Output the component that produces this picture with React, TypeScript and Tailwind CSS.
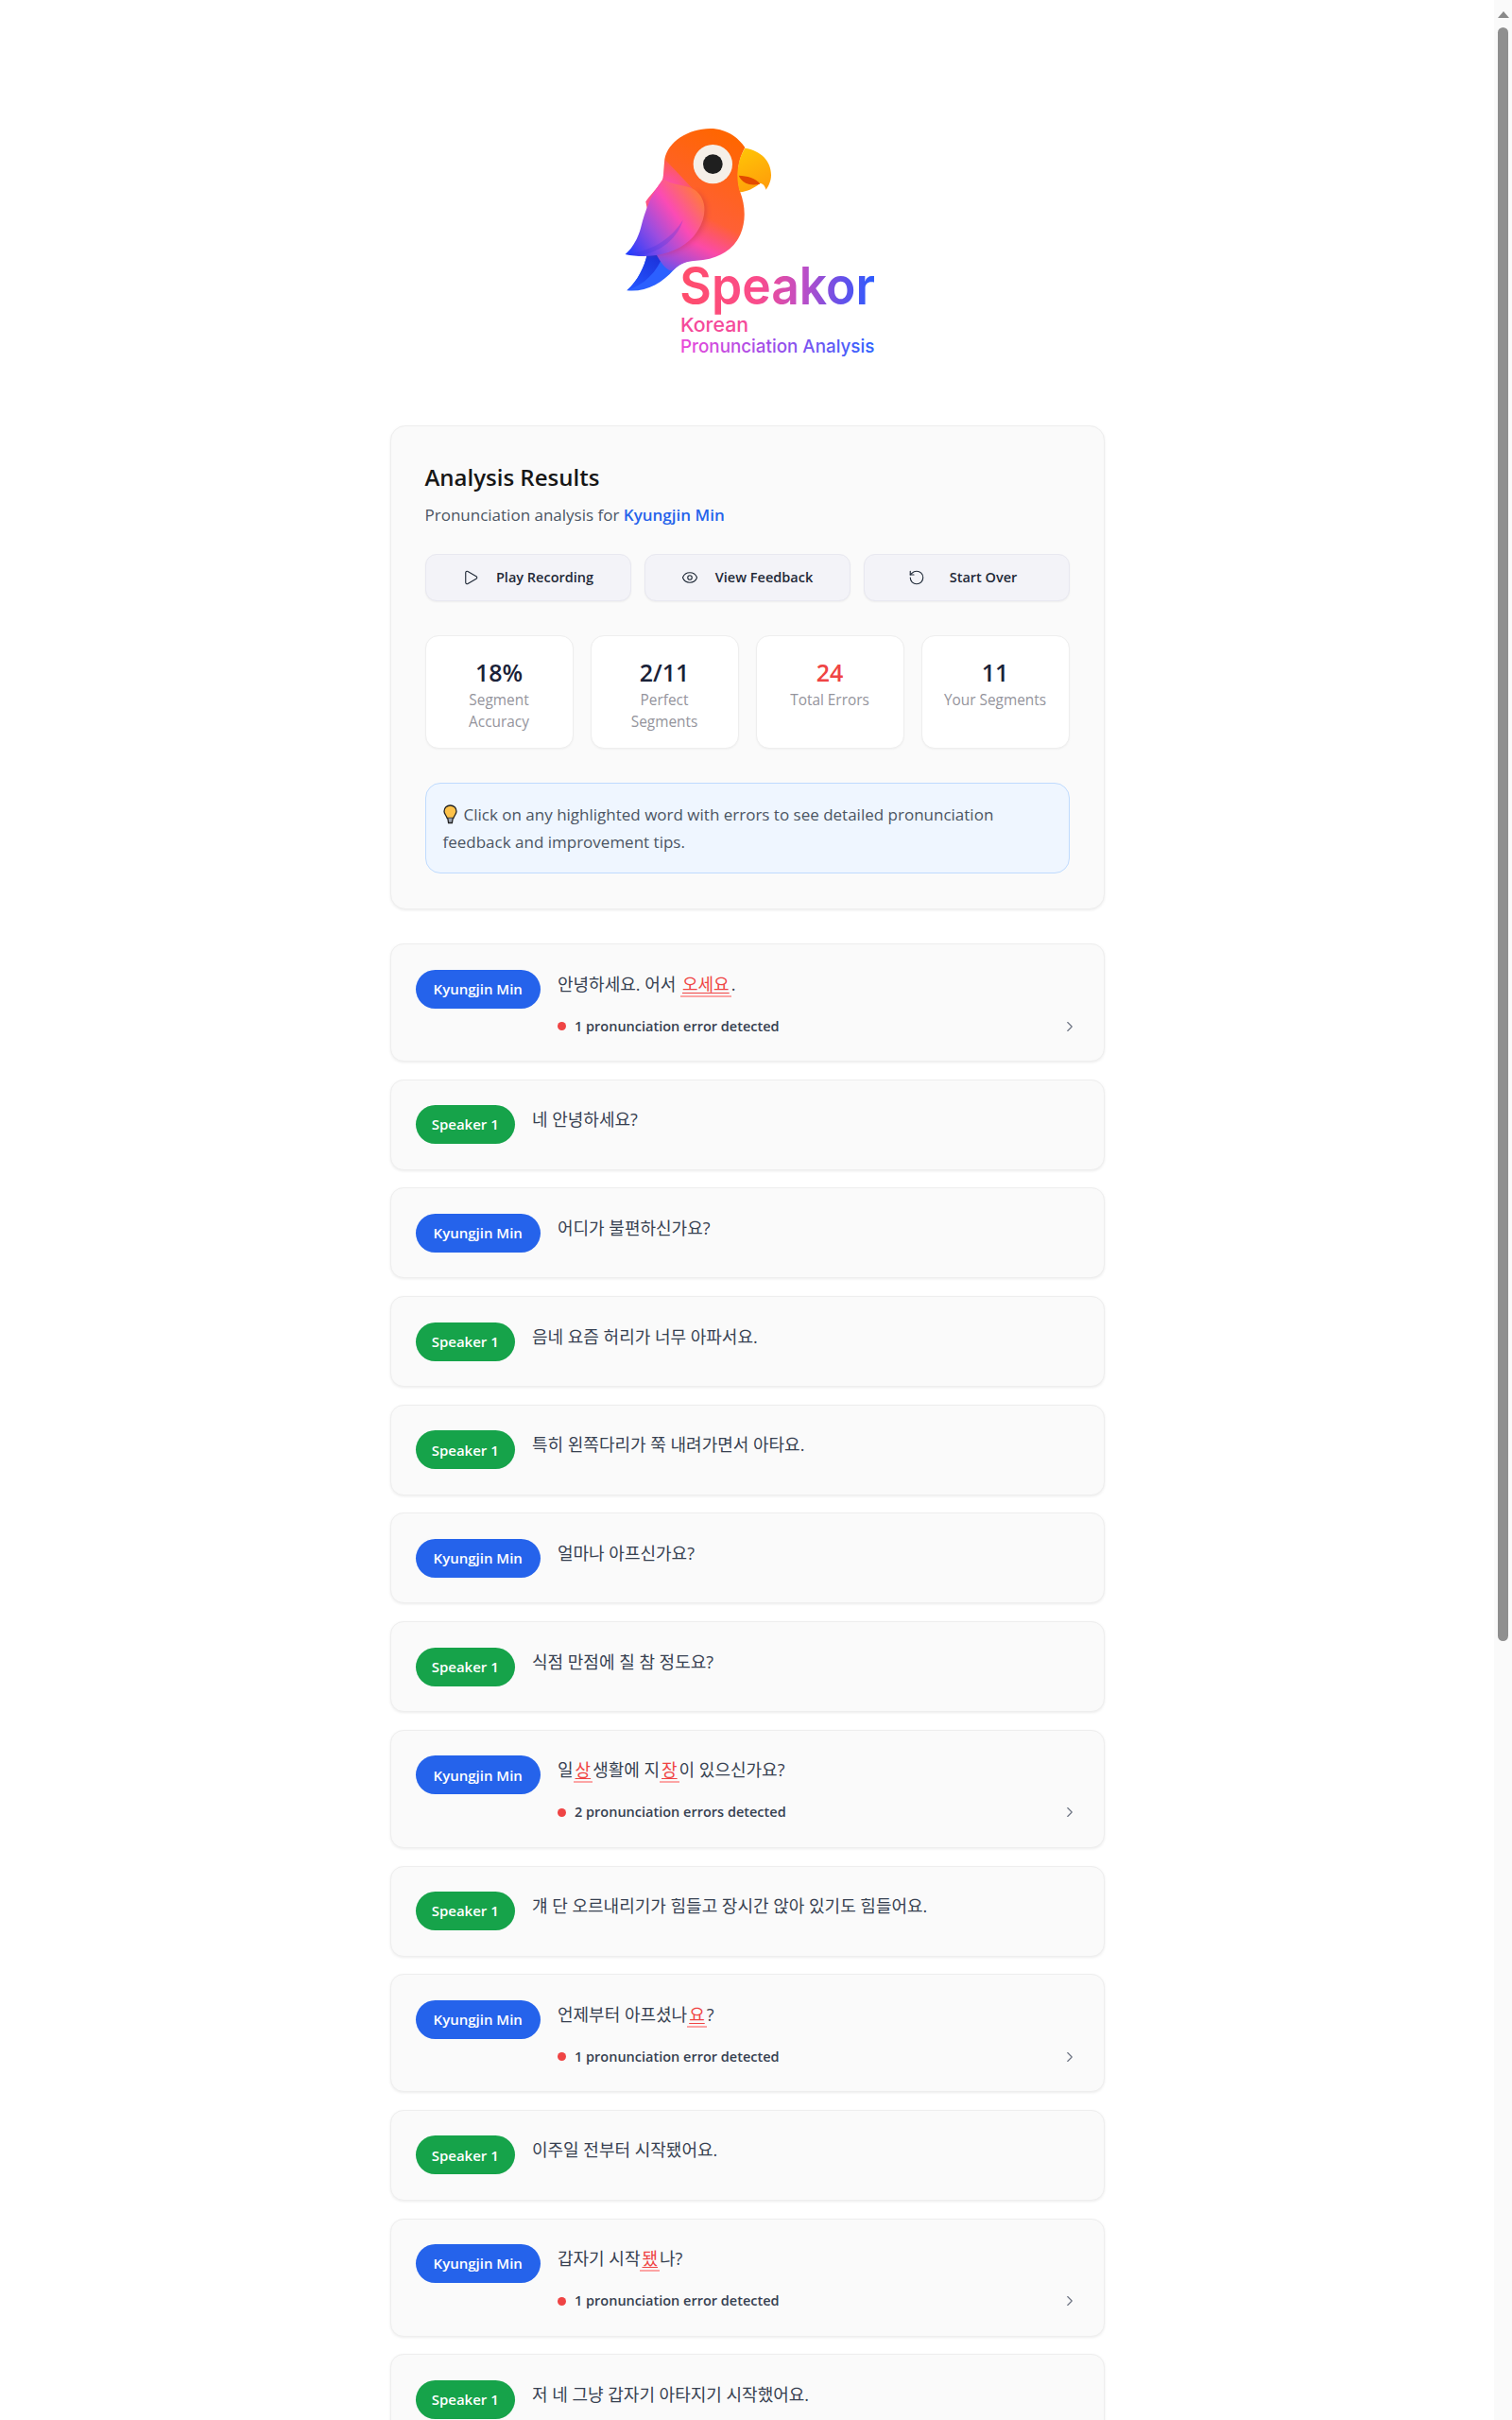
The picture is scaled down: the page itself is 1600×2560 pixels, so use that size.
import { ChevronRight, Eye, Play, RotateCcw } from "lucide-react";

const USER = "Kyungjin Min";
const OTHER = "Speaker 1";

type Part = string | { err: string };

type Segment = {
  speaker: string;
  parts: Part[];
  errors?: string;
};

const segments: Segment[] = [
  { speaker: USER, parts: ["안녕하세요. 어서 ", { err: "오세요" }, "."], errors: "1 pronunciation error detected" },
  { speaker: OTHER, parts: ["네 안녕하세요?"] },
  { speaker: USER, parts: ["어디가 불편하신가요?"] },
  { speaker: OTHER, parts: ["음네 요즘 허리가 너무 아파서요."] },
  { speaker: OTHER, parts: ["특히 왼쪽다리가 쭉 내려가면서 아타요."] },
  { speaker: USER, parts: ["얼마나 아프신가요?"] },
  { speaker: OTHER, parts: ["식점 만점에 칠 참 정도요?"] },
  { speaker: USER, parts: ["일", { err: "상" }, "생활에 지", { err: "장" }, "이 있으신가요?"], errors: "2 pronunciation errors detected" },
  { speaker: OTHER, parts: ["걔 단 오르내리기가 힘들고 장시간 앉아 있기도 힘들어요."] },
  { speaker: USER, parts: ["언제부터 아프셨나", { err: "요" }, "?"], errors: "1 pronunciation error detected" },
  { speaker: OTHER, parts: ["이주일 전부터 시작됐어요."] },
  { speaker: USER, parts: ["갑자기 시작", { err: "됐" }, "나?"], errors: "1 pronunciation error detected" },
  { speaker: OTHER, parts: ["저 네 그냥 갑자기 아타지기 시작했어요."] },
];

const stats = [
  { value: "18%", label: "Segment Accuracy" },
  { value: "2/11", label: "Perfect Segments" },
  { value: "24", label: "Total Errors", red: true },
  { value: "11", label: "Your Segments" },
];

function Logo() {
  return (
    <svg width="381" height="300" viewBox="0 0 1143 900" className="shrink-0">
      <defs>
        <linearGradient id="body" gradientUnits="userSpaceOnUse" x1="520" y1="130" x2="270" y2="620">
          <stop offset="0" stopColor="#ff6600" />
          <stop offset="0.48" stopColor="#ff6035" />
          <stop offset="0.65" stopColor="#fb4aa8" />
          <stop offset="0.79" stopColor="#a24bd8" />
          <stop offset="0.93" stopColor="#2b5cff" />
        </linearGradient>
        <radialGradient id="chest" gradientUnits="userSpaceOnUse" cx="315" cy="300" r="120">
          <stop offset="0" stopColor="#fb4ac0" />
          <stop offset="1" stopColor="#fb4ac0" stopOpacity="0" />
        </radialGradient>
        <linearGradient id="wing" gradientUnits="userSpaceOnUse" x1="435" y1="335" x2="195" y2="510">
          <stop offset="0" stopColor="#ff7a3c" />
          <stop offset="0.34" stopColor="#fb4bb4" />
          <stop offset="0.64" stopColor="#9a4de0" />
          <stop offset="1" stopColor="#1f3dff" />
        </linearGradient>
        <linearGradient id="tail" gradientUnits="userSpaceOnUse" x1="300" y1="510" x2="210" y2="625">
          <stop offset="0" stopColor="#1b2fd8" />
          <stop offset="1" stopColor="#2356ff" />
        </linearGradient>
        <linearGradient id="beak" gradientUnits="userSpaceOnUse" x1="570" y1="180" x2="630" y2="300">
          <stop offset="0" stopColor="#ffc107" />
          <stop offset="1" stopColor="#ff9d0a" />
        </linearGradient>
        <linearGradient id="word" gradientUnits="userSpaceOnUse" x1="360" y1="600" x2="975" y2="640">
          <stop offset="0" stopColor="#ff4d6a" />
          <stop offset="0.4" stopColor="#fa4c8c" />
          <stop offset="0.62" stopColor="#c24ec4" />
          <stop offset="0.82" stopColor="#6a50e8" />
          <stop offset="1" stopColor="#2a5cff" />
        </linearGradient>
        <linearGradient id="tagline" gradientUnits="userSpaceOnUse" x1="360" y1="800" x2="975" y2="800">
          <stop offset="0" stopColor="#ec48d8" />
          <stop offset="0.55" stopColor="#8f50ec" />
          <stop offset="1" stopColor="#2f62ff" />
        </linearGradient>
        <filter id="soft" x="-20%" y="-20%" width="140%" height="140%">
          <feGaussianBlur stdDeviation="8" />
        </filter>
      </defs>
      <path
        d="M255 505 C245 550 225 590 190 622 C250 628 300 600 340 555 C360 535 380 528 410 525 L330 480 Z"
        fill="#2b60ff"
      />
      <path d="M255 505 C245 550 225 590 190 622 C245 605 285 565 308 505 Z" fill="url(#tail)" />
      <path
        d="M455 108 C500 108 540 130 565 168 C545 205 535 250 550 310 C565 350 570 400 550 445 C525 500 470 525 410 527 C385 528 360 535 340 555 C325 570 300 540 280 500 L250 340 C280 300 300 285 305 265 C308 240 308 225 310 205 C320 150 385 108 455 108 Z"
        fill="url(#body)"
      />
      <path
        d="M305 265 C308 240 308 225 310 205 L400 300 L300 400 L250 340 C280 300 300 285 305 265 Z"
        fill="url(#chest)"
      />
      <path
        d="M230 505 C300 520 385 500 425 435 C455 385 450 335 412 305 L400 420 Z"
        fill="#b0204e"
        opacity="0.3"
        filter="url(#soft)"
      />
      <path
        d="M305 268 C265 320 248 370 235 420 C225 460 205 490 185 507 C265 525 370 505 415 432 C445 385 445 330 405 302 C375 285 335 290 305 268 Z"
        fill="url(#wing)"
      />
      <path d="M185 507 C265 500 330 460 368 398 C350 465 270 525 185 507 Z" fill="#3a2fe0" opacity="0.25" />
      <circle cx="463" cy="221" r="62" fill="#f5efe8" />
      <circle cx="463" cy="221" r="31" fill="#1f1f1f" />
      <path
        d="M565 170 C615 178 648 210 648 255 C648 275 640 290 632 302 C628 290 622 282 612 282 C595 298 570 308 550 310 C538 280 535 215 565 170 Z"
        fill="url(#beak)"
      />
      <path d="M545 257 C572 258 600 265 613 284 C585 290 558 285 545 257 Z" fill="#e34a00" />
      <g fontFamily="Inter, sans-serif">
        <text x="358" y="665" fontSize="165" fontWeight="600" fill="url(#word)" textLength="620" lengthAdjust="spacingAndGlyphs">
          Speakor
        </text>
        <text x="360" y="754" fontSize="62" fontWeight="500" fill="#f54a9a" textLength="216" lengthAdjust="spacingAndGlyphs">
          Korean
        </text>
        <text x="360" y="818" fontSize="57" fontWeight="500" fill="url(#tagline)" textLength="616" lengthAdjust="spacingAndGlyphs">
          Pronunciation Analysis
        </text>
      </g>
    </svg>
  );
}

function Bulb() {
  return (
    <svg width="15" height="21" viewBox="0 0 15 21" className="mr-[7px] inline-block align-[-4px]">
      <path
        d="M7.5 1 C3.8 1 1 3.8 1 7.2 C1 9.8 3 11.3 4.2 14.5 L10.8 14.5 C12 11.3 14 9.8 14 7.2 C14 3.8 11.2 1 7.5 1 Z"
        fill="#fdc24a"
        stroke="#222222"
        strokeWidth="1.3"
      />
      <path d="M4.8 14.5 L5.6 19.5 L9.4 19.5 L10.2 14.5" fill="#9ca3af" stroke="#222222" strokeWidth="1.3" />
    </svg>
  );
}

function SegmentCard({ segment }: { segment: Segment }) {
  const isUser = segment.speaker === USER;
  return (
    <div className="flex items-start gap-[18.5px] rounded-[14px] border border-[#eeeeee] bg-[#fafafa] p-[26.5px] shadow-[0_1px_3px_rgba(0,0,0,0.08)]">
      <span
        className={
          isUser
            ? "flex h-[41px] w-[131.5px] shrink-0 items-center justify-center rounded-full bg-[#2563eb] text-[15px] font-semibold text-white"
            : "flex h-[41px] w-[104.5px] shrink-0 items-center justify-center rounded-full bg-[#16a34a] text-[15px] font-semibold text-white"
        }
      >
        {segment.speaker}
      </span>
      <div className="min-w-0 flex-1">
        <p className="pt-[1px] text-[18px] leading-[29px] text-[#374151]">
          {segment.parts.map((part, i) =>
            typeof part === "string" ? (
              <span key={i}>{part}</span>
            ) : (
              <span
                key={i}
                className="border-b-2 border-[#fca5a5] px-[2px] text-[#ef4444] underline decoration-[#ef4444] underline-offset-2"
              >
                {part.err}
              </span>
            ),
          )}
        </p>
        {segment.errors && (
          <div className="mt-[20px] flex h-[20px] items-center justify-between">
            <div className="flex items-center gap-[9px] text-[14.5px] font-semibold text-[#374151]">
              <span className="h-[9px] w-[9px] rounded-full bg-[#ef4444]" />
              {segment.errors}
            </div>
            <ChevronRight className="h-[18px] w-[18px] text-[#6b7280]" strokeWidth={1.5} />
          </div>
        )}
      </div>
    </div>
  );
}

export default function App() {
  return (
    <div className="flex h-screen overflow-hidden bg-white font-['Open_Sans','Noto_Sans_CJK_KR',sans-serif]">
      <main className="min-w-0 flex-1">
        <div className="mx-auto flex w-[756px] flex-col pt-[100px]">
          <div className="mb-[50px] flex justify-center">
            <Logo />
          </div>

          <section className="rounded-[16px] border border-[#eeeeee] bg-[#fafafa] px-[36px] pb-[37px] pt-[36px] shadow-[0_1px_3px_rgba(0,0,0,0.08)]">
            <h1 className="text-[24px] font-semibold leading-[36px] text-[#171717]">Analysis Results</h1>
            <p className="mt-[9px] text-[17px] leading-[26px] text-[#4b5563]">
              Pronunciation analysis for <span className="font-semibold text-[#2563eb]">Kyungjin Min</span>
            </p>

            <div className="mt-[28px] grid grid-cols-3 gap-[14px]">
              <button className="flex h-[50px] items-center justify-center gap-[18px] rounded-[12px] border border-[#e8e8f0] bg-[#f3f3f8] text-[14.5px] font-semibold text-[#1f2937] shadow-[0_1px_2px_rgba(0,0,0,0.05)]">
                <Play className="h-[18px] w-[18px]" strokeWidth={1.5} />
                Play Recording
              </button>
              <button className="flex h-[50px] items-center justify-center gap-[18px] rounded-[12px] border border-[#e8e8f0] bg-[#f3f3f8] text-[14.5px] font-semibold text-[#1f2937] shadow-[0_1px_2px_rgba(0,0,0,0.05)]">
                <Eye className="h-[18px] w-[18px]" strokeWidth={1.5} />
                View Feedback
              </button>
              <button className="flex h-[50px] items-center justify-center gap-[26px] rounded-[12px] border border-[#e8e8f0] bg-[#f3f3f8] pr-[8px] text-[14.5px] font-semibold text-[#1f2937] shadow-[0_1px_2px_rgba(0,0,0,0.05)]">
                <RotateCcw className="h-[18px] w-[18px]" strokeWidth={1.5} />
                Start Over
              </button>
            </div>

            <div className="mt-[36px] grid grid-cols-4 gap-[18px]">
              {stats.map((stat) => (
                <div
                  key={stat.label}
                  className="h-[120px] rounded-[14px] border border-[#eeeeee] bg-white px-[18px] pt-[20px] text-center shadow-[0_1px_2px_rgba(0,0,0,0.04)]"
                >
                  <div className={stat.red ? "text-[25px] font-semibold leading-[36px] text-[#ef4444]" : "text-[25px] font-semibold leading-[36px] text-[#1a2238]"}>
                    {stat.value}
                  </div>
                  <div className="text-[15.4px] font-medium leading-[23px] text-[#94949c]">{stat.label}</div>
                </div>
              ))}
            </div>

            <div className="mt-[36px] rounded-[16px] border border-[#bfdbfe] bg-[#eff6ff] px-[18px] py-[18px] text-[17px] leading-[29px] text-[#4b5563]">
              <Bulb />
              Click on any highlighted word with errors to see detailed pronunciation feedback and improvement tips.
            </div>
          </section>

          <div className="mt-[36px] flex flex-col gap-[18.7px]">
            {segments.map((segment, i) => (
              <SegmentCard key={i} segment={segment} />
            ))}
          </div>
        </div>
      </main>

      <aside className="flex h-screen w-[19px] shrink-0 flex-col items-center bg-[#fafafa] pt-[12px]">
        <div className="h-0 w-0 border-x-[6px] border-b-[7px] border-x-transparent border-b-[#8a8a8a]" />
        <div className="mt-[10px] h-[1707px] w-[11px] rounded-full bg-[#8f8f8f]" />
      </aside>
    </div>
  );
}
